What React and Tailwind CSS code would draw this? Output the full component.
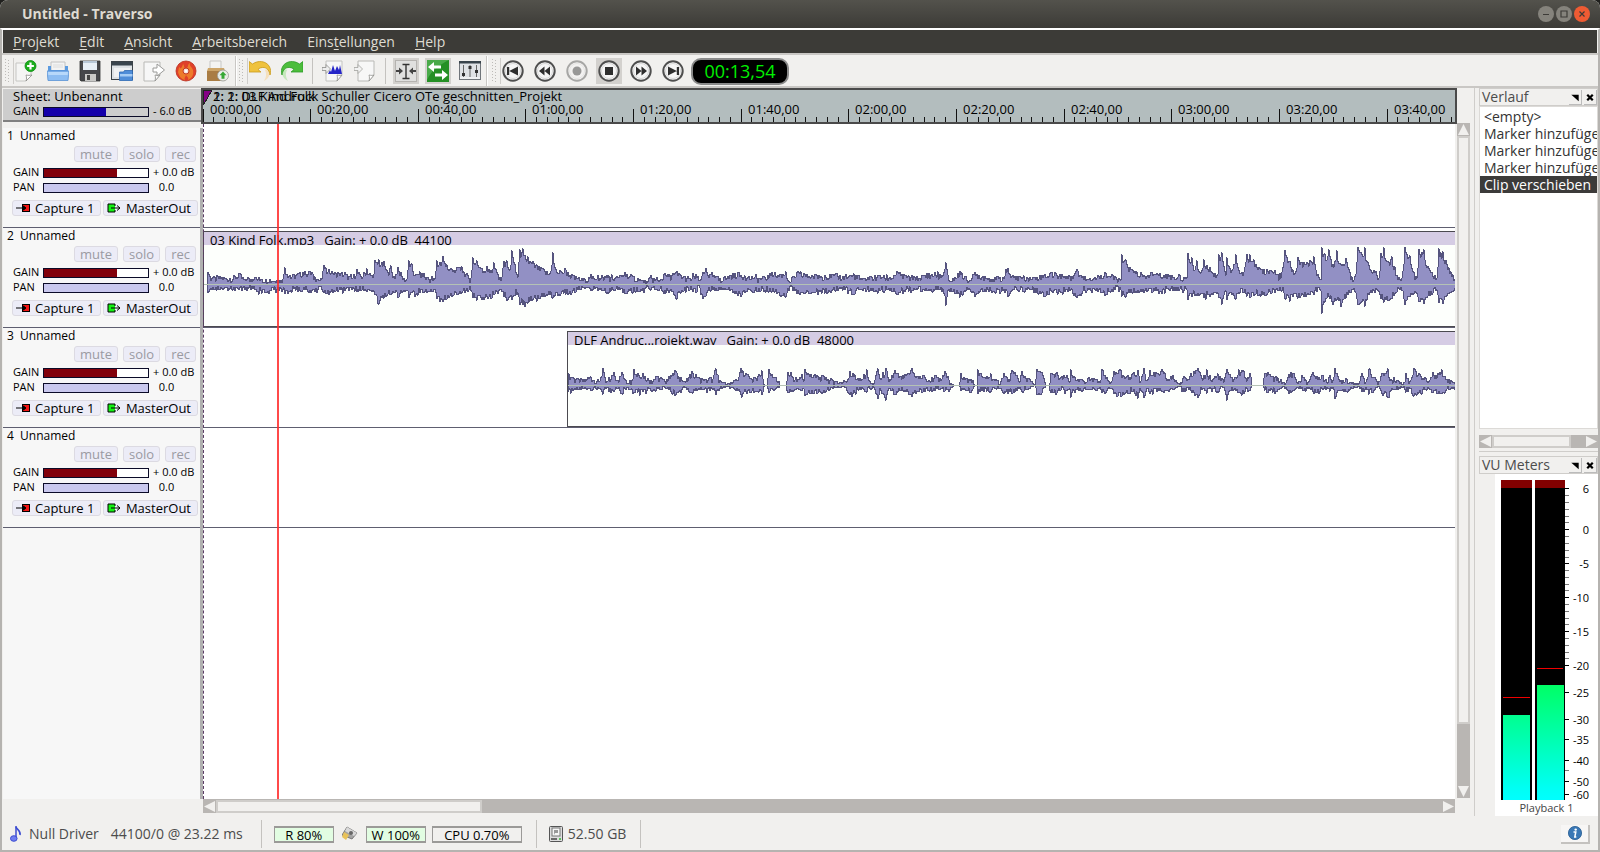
import React, { useState } from "react";

const PX_PER_SEC = 5.382;

const tracks = [
  { id: 1, name: "Unnamed" },
  { id: 2, name: "Unnamed" },
  { id: 3, name: "Unnamed" },
  { id: 4, name: "Unnamed" },
];

// envelope points: [x, up, down]
const kindFolk = [
  [3,0,0],[4,12,8],[8,6,5],[16,8,5],[26,6,5],[35,11,5],[41,5,5],[51,7,5],[58,5,9],[66,5,6],[73,4,5],[79,5,5],[81,17,9],[86,9,7],[96,12,6],[106,13,6],[111,8,7],[118,5,5],[120,19,8],[125,15,10],[131,12,7],[141,12,6],[148,6,5],[153,15,7],[157,8,6],[163,16,7],[169,7,6],[171,24,10],[175,25,20],[180,23,14],[184,12,10],[187,19,10],[190,8,8],[194,17,13],[198,8,8],[203,5,6],[205,24,13],[208,21,8],[211,9,12],[216,13,8],[224,7,7],[231,5,5],[233,24,14],[236,22,17],[239,28,17],[243,20,15],[248,15,12],[253,17,10],[258,18,8],[264,9,7],[267,6,6],[269,27,13],[273,24,16],[278,16,15],[283,18,12],[287,14,14],[290,22,10],[294,10,9],[297,4,5],[300,23,12],[303,24,16],[306,14,12],[308,34,15],[311,20,11],[314,7,8],[316,35,20],[319,36,20],[321,29,22],[324,28,19],[329,23,15],[333,20,17],[339,16,12],[346,11,10],[349,32,14],[351,17,12],[356,14,11],[362,15,10],[368,10,9],[374,6,5],[381,5,4],[394,9,6],
  [396,6,5],[403,9,9],[411,6,6],[421,12,9],[428,9,8],[436,5,7],[444,2,2],[446,7,5],[456,4,5],[460,10,9],[468,9,7],[473,13,15],[476,10,8],[486,6,6],[492,10,8],[496,4,3],[499,12,14],[502,16,12],[506,10,6],[516,6,5],[526,9,6],[534,12,11],[541,9,8],[551,7,6],[561,7,6],[568,12,8],[576,10,11],[582,13,13],[586,2,2],[593,12,9],[601,10,9],[611,10,8],[621,9,9],[631,10,6],[641,8,5],[650,11,10],[658,5,5],[666,8,6],[676,9,6],[686,7,6],[693,13,10],[701,9,7],[711,7,5],[721,9,6],[731,12,6],[739,8,4],[742,22,21],[745,4,5],[751,7,9],[756,13,13],[761,8,6],[766,4,5],[771,12,12],[781,8,5],[791,7,8],[799,7,6],[804,16,12],[808,8,6],
  [816,8,6],[826,7,5],[841,10,12],[848,12,7],[856,10,7],[866,8,6],[873,15,13],[879,8,7],[891,7,5],[901,12,11],[911,8,5],[917,4,5],[918,30,12],[922,25,13],[926,17,8],[933,13,8],[941,8,6],[948,12,8],[956,11,7],[966,9,6],[976,9,5],[983,6,5],[984,31,15],[988,27,12],[991,14,11],[993,24,11],[997,11,9],[1000,25,13],[1006,17,12],[1011,11,8],[1014,10,8],[1015,30,13],[1018,32,20],[1022,9,6],[1023,27,15],[1028,14,10],[1032,30,15],[1035,14,8],[1040,12,8],[1043,30,12],[1046,30,13],[1050,25,11],[1056,16,10],[1063,15,10],[1071,14,8],[1077,6,6],[1080,22,8],[1081,34,14],[1086,23,17],[1091,11,9],[1094,27,14],[1100,22,12],[1106,24,10],[1110,28,10],[1113,9,7],[1117,5,6],[1118,37,29],[1121,31,18],[1125,35,12],[1129,20,20],[1133,34,15],[1137,20,22],[1142,26,14],[1146,12,8],[1150,4,4],[1153,22,14],[1154,37,20],[1161,37,22],[1165,19,10],[1171,12,8],[1175,6,7],[1177,31,14],[1180,37,18],[1184,23,16],[1188,28,14],[1193,9,8],[1198,6,6],[1200,20,14],[1201,37,20],[1206,29,12],[1210,12,10],[1213,6,9],[1215,35,17],[1220,35,19],[1224,18,12],[1228,12,10],[1233,6,5],[1235,36,18],[1239,33,19],[1242,24,12],[1247,13,8],[1251,5,4],
];

const andruck = [
  [0,12,6],[8,6,4],[16,6,3],[23,9,5],[31,4,3],[35,17,9],[38,3,3],[43,6,7],[46,13,6],[50,5,3],[54,13,8],[58,5,4],[64,5,3],[66,16,7],[70,12,7],[75,12,6],[83,5,5],[88,9,6],[93,8,4],[97,4,2],[103,10,6],[107,15,10],[113,8,7],[117,4,2],[121,8,6],[124,14,7],[130,8,4],[136,5,4],[142,8,5],[145,6,4],[148,17,9],[152,5,3],[158,1,1],[166,5,3],[170,5,5],[173,17,9],[179,11,8],[184,6,6],[191,11,7],[194,15,9],[196,1,1],[199,0,0],[201,16,7],[206,8,5],[211,4,2],[212,0,0],[218,0,0],[220,13,7],[223,13,6],[229,4,3],[234,11,5],[236,4,3],[237,16,10],[243,11,8],[249,10,8],[258,8,6],[265,5,3],[273,3,2],[278,4,2],[282,14,9],[287,11,7],[293,5,4],[299,16,7],[302,4,3],[305,1,1],[310,17,13],[313,6,5],[318,17,15],[321,4,3],[327,15,9],[333,9,5],[338,10,6],[344,17,11],[350,9,6],[355,10,7],[361,5,5],[367,10,5],[373,5,3],[377,14,6],[381,6,6],[385,1,1],[386,0,0],[391,0,0],[393,12,5],[398,7,5],[403,6,7],[407,0,0],[409,0,0],[410,16,8],[416,8,6],[423,12,6],[427,5,3],[433,4,3],
  [436,12,8],[441,6,4],[444,15,8],[449,10,5],[452,3,2],[454,14,6],[460,7,4],[465,2,1],[467,0,0],[469,16,9],[474,13,8],[478,0,0],[481,0,0],[483,12,7],[488,12,9],[493,8,5],[499,10,5],[502,3,3],[503,16,12],[508,5,4],[515,5,5],[521,8,4],[528,6,5],[532,3,2],[534,16,7],[539,8,5],[544,4,3],[546,14,8],[553,15,11],[558,8,7],[565,12,6],[570,15,13],[572,3,3],[576,17,12],[579,5,3],[582,15,8],[589,12,6],[594,16,6],[600,6,5],[605,10,4],[610,2,1],[612,1,1],[616,9,6],[623,12,5],[630,17,12],[634,7,4],[639,16,8],[643,5,3],[650,12,6],[656,3,2],[659,16,15],[662,11,5],[666,6,4],[671,16,7],[676,15,8],[679,4,3],[682,12,5],[684,0,0],[695,0,0],[697,12,5],[700,13,7],[705,9,7],[713,6,3],[718,2,2],[721,11,8],[726,12,5],[729,3,2],[735,8,5],[740,3,3],[745,13,6],[751,8,8],[755,10,4],[759,3,2],[762,10,6],[765,5,2],[767,17,13],[771,6,5],[778,7,6],[785,3,3],[791,2,1],[794,12,6],[798,3,2],[801,16,9],[807,8,4],[810,1,1],[814,12,8],[820,17,12],[823,6,5],[830,5,4],[836,3,1],[838,12,7],[842,4,3],[846,17,11],[851,12,8],[857,8,4],[860,3,2],[865,13,7],[870,12,8],[874,16,8],[879,6,4],[883,5,3],[888,4,4],
];

const noise = (n) => {
  const v = Math.sin(n * 12.9898) * 43758.5453;
  return v - Math.floor(v);
};

// roughens the interpolated level so that it reads as audio
const jitter = (level, seed) => {
  if (level < 1) return 0;
  const n = noise(seed);
  const spike = noise(seed + 0.37) > 0.88 ? 2 : 0;
  const spread = Math.min(level, 6);
  return Math.max(1, Math.round(level * 0.85 + (n - 0.6) * spread + spike));
};

const buildWave = (points, mid) => {
  const up = [];
  const down = [];
  const end = points[points.length - 1][0];
  let k = 0;
  for (let x = points[0][0]; x <= end; x++) {
    while (k < points.length - 2 && x > points[k + 1][0]) k++;
    const [x0, u0, d0] = points[k];
    const [x1, u1, d1] = points[k + 1];
    const t = (x - x0) / (x1 - x0);
    const onPoint = x === x0 || x === x1;
    const u = u0 + (u1 - u0) * t;
    const d = d0 + (d1 - d0) * t;
    up.push([x, mid - (onPoint ? Math.round(u) : jitter(u, x))]);
    down.push([x, mid + (onPoint ? Math.round(d) : jitter(d, x + 5000))]);
  }
  const line = (pts) => pts.map(([x, y]) => `L${x} ${y}`).join("");
  return `M${points[0][0]} ${mid}${line(up)}${line(down.reverse())}Z`;
};

const Waveform = ({ points, mid }) => (
  <svg className="block w-full h-[81px]" shapeRendering="crispEdges">
    <path d={buildWave(points, mid + 0.5)} fill="#9290c4" stroke="#55547e" strokeWidth="1" />
    <rect x="0" y={mid} width="100%" height="1" fill="#b4c2b4" />
  </svg>
);

const Clip = ({ name, rate, start, points, mid }) => (
  <div
    className="h-24 border-t border-l border-b border-[#4b4a50] bg-[#fdfffc]"
    style={{ marginLeft: start }}
  >
    <div className="h-[13px] overflow-hidden bg-[#d5cce4] pl-1.5 text-[13px] leading-[17px] flex gap-2.5 whitespace-pre">
      <span>{name}</span>
      <span>Gain: + 0.0 dB  {rate}</span>
    </div>
    <Waveform points={points} mid={mid} />
  </div>
);

/* ---------- toolbar icons ---------- */

const Svg = ({ children }) => (
  <svg viewBox="0 0 22 22" className="w-[22px] h-[22px]">
    {children}
  </svg>
);

const NewIcon = () => (
  <Svg>
    <path d="M1 3h15v12l-5 6H1z" fill="#f5f5f4" stroke="#c6c6c3" />
    <path d="M11 21c.8-2 .6-4 0-6 2 .6 4 .4 6 0z" fill="#fff" stroke="#8a8a88" strokeWidth=".8" />
    <circle cx="15.500" cy="6" r="5.500" fill="#1cae1c" stroke="#0b8a12" strokeWidth=".8" />
    <path d="M15.500 2.600v6.800M12.100 6h6.800" stroke="#fff" strokeWidth="2.200" />
  </Svg>
);
const OpenIcon = () => (
  <Svg>
    <path d="M4 2h14v10H4z" fill="#f3f3f3" stroke="#c2c2c2" />
    <path d="M6 5h10M6 7h10" stroke="#ddd" />
    <path d="M1 6h3v4h14V6h3v7H1z" fill="#5c9be0" />
    <path d="M0 11h22l-1 9.500H1z" fill="#8dbdf2" stroke="#5a93d4" strokeWidth=".8" />
    <path d="M1 12h20l-.3 3H1.300z" fill="#b7d8fa" />
  </Svg>
);
const SaveIcon = () => (
  <Svg>
    <path d="M1 1h20v20H2l-1-1z" fill="#45464a" stroke="#333" strokeWidth=".8" />
    <path d="M4 1h14v9H4z" fill="#e6eef6" />
    <path d="M4 1h14v2H4z" fill="#b7c7d7" />
    <path d="M6 14h11v7H6z" fill="#c9c9c7" />
    <path d="M8 15h3v5H8z" fill="#444" />
  </Svg>
);
const WindowIcon = () => (
  <Svg>
    <rect x=".5" y="1.500" width="21" height="18" fill="#dde1e4" stroke="#3b4247" />
    <path d="M1 2h20v3.500H1z" fill="#39444c" />
    <path d="M3 8h16v9H3z" fill="#f0f1f2" />
    <path d="M8.500 12h4l1-1.500h8V20.500h-13z" fill="#4f8dd8" stroke="#2e69b4" strokeWidth=".8" />
    <path d="M9 14h12.500v2.500H9z" fill="#a6ccf4" />
  </Svg>
);
const ExportIcon = () => (
  <Svg>
    <path d="M1 2h16v13l-5 6H1z" fill="#f7f7f7" stroke="#b9b9b6" />
    <path d="M12 21c.6-2 .6-4 0-6 2 .6 4 .4 5 0z" fill="#fff" stroke="#8f8f8c" strokeWidth=".8" />
    <path d="M10 8h4V4l7.500 6-7.500 6v-4h-4z" fill="#fff" stroke="#9a9a98" />
  </Svg>
);
const BurnIcon = () => (
  <Svg>
    <circle cx="11" cy="11" r="10" fill="#e0402a" stroke="#b92e1c" strokeWidth=".8" />
    <path d="M3 12c1-2 0-4 2-5 0 3 2 1 3-3 2 2 0 4 3 4s1-4 4-5c-1 3 2 4 3 7 1 5-1 8-5 10 1-3-1-3-2-5-1 3-2 3-1 5-4-1-6-4-7-8z" fill="#f08a2a" opacity=".8" />
    <circle cx="11" cy="11" r="3" fill="#f4d9d0" stroke="#c33a24" />
    <circle cx="11" cy="11" r="1.500" fill="#fff" />
  </Svg>
);
const PackIcon = () => (
  <Svg>
    <path d="M3 1h11v9H3z" fill="#f4f4f2" stroke="#c7c7c4" />
    <path d="M1 8h16l1 3H0z" fill="#cda568" />
    <path d="M0 11h18v10H0z" fill="#a97c43" />
    <circle cx="16" cy="15.500" r="5.500" fill="#e9ece7" stroke="#9a9d98" strokeWidth=".8" />
    <path d="M16 11.500l3.500 3.800h-2v3.500h-3v-3.500h-2z" fill="#36a836" />
  </Svg>
);
const UndoIcon = () => (
  <Svg>
    <path d="M15 21c6-3 6-8 6-10-1-2-4-2-5-1 2 4 1 8-1 11z" fill="#f6d9a8" opacity=".7" />
    <path d="M0 1.500L3.500 4C9 0 17 1 20 6c2 3 2 6 1 9-.5-4-2.500-7-6-7.500-2.500-.3-4.500.5-6 2L12 12H0z" fill="#efc23e" stroke="#c99b1c" strokeWidth=".8" />
  </Svg>
);
const RedoIcon = () => (
  <Svg>
    <path d="M7 21c-6-3-6-8-6-10 1-2 4-2 5-1-2 4-1 8 1 11z" fill="#b4e4a8" opacity=".7" />
    <path d="M22 1.500L18.500 4C13 0 5 1 2 6c-2 3-2 6-1 9 .5-4 2.500-7 6-7.500 2.500-.3 4.500.5 6 2L10 12h12z" fill="#4cbd3c" stroke="#2f9a28" strokeWidth=".8" />
  </Svg>
);
const ImportAudioIcon = () => (
  <Svg>
    <path d="M4 1h16v14l-5 6H4z" fill="#f7f7f7" stroke="#c4c4c1" />
    <path d="M6 14l2-4 1 2 2-7 2 6 2-5 2 4 1-5 2 9z" fill="#2525c8" />
    <path d="M15 21c.6-2 .6-4 0-6 2 .6 4 .4 5 0z" fill="#fff" stroke="#8f8f8c" strokeWidth=".8" />
    <path d="M0 7.500h4V4.500l4.500 4.500L4 13.500v-3H0z" fill="#eee" stroke="#8d8d8a" strokeWidth=".8" />
  </Svg>
);
const ImportIcon = () => (
  <Svg>
    <path d="M4 1h16v14l-5 6H4z" fill="#f7f7f7" stroke="#b9b9b6" />
    <path d="M15 21c.6-2 .6-4 0-6 2 .6 4 .4 5 0z" fill="#fff" stroke="#8f8f8c" strokeWidth=".8" />
    <path d="M0 7.500h4V4.500l4.500 4.500L4 13.500v-3H0z" fill="#f2f2f2" stroke="#a3a3a0" strokeWidth=".8" />
  </Svg>
);
const SnapIcon = () => (
  <Svg>
    <rect x=".5" y=".5" width="21" height="21" fill="#e0e0df" stroke="#b5b3b0" />
    <path d="M7.500 4.500h3l.5.500.5-.5h3M11 5v13M7.500 18.500h3l.5-.5.5.5h3" stroke="#333" fill="none" strokeWidth="1.400" />
    <path d="M1 11h4M21 11h-4" stroke="#444" strokeWidth="2" />
    <path d="M4 7.500L8 11l-4 3.500zM18 7.500L14 11l4 3.500z" fill="#444" />
  </Svg>
);
const SwapIcon = () => (
  <Svg>
    <rect width="22" height="22" fill="#259025" />
    <path d="M0 0h22C14 4 4 10 0 20z" fill="#62bd62" opacity=".6" />
    <path d="M1 7l6-5v3.500h7v3H7V12zM21 15l-6-5v3.500H8v3h7V20z" fill="#fff" />
  </Svg>
);
const MixerIcon = () => (
  <Svg>
    <rect x=".5" y="1.500" width="21" height="18" fill="#dfe2e5" stroke="#70757a" />
    <path d="M0 1h22v2.500H0z" fill="#39444c" />
    <path d="M4.500 5v12M11 5v12M17.500 5v12" stroke="#666" />
    <path d="M3 13h3v3H3zM9.500 6h3v3h-3zM16 10h3v3h-3z" fill="#333" />
    <path d="M1 18h20" stroke="#fff" />
  </Svg>
);

const Transport = ({ dim, children }) => (
  <Svg>
    <g opacity={dim ? 0.45 : 1}>
      <circle cx="11" cy="11" r="9.700" fill="#f6f6f6" stroke="#4f4f4f" strokeWidth="2" />
      <circle cx="11" cy="11" r="7.500" fill="none" stroke="#d8d8d8" />
      <g fill="#2e2e2e">{children}</g>
    </g>
  </Svg>
);

const fileActions = [
  ["New project", NewIcon],
  ["Open project", OpenIcon],
  ["Save", SaveIcon],
  ["Manage project", WindowIcon],
  ["Export", ExportIcon],
  ["Burn CD", BurnIcon],
  ["Archive", PackIcon],
];

const transport = [
  ["To start", <path d="M5 7h2.200v8H5zM16 6.500v9L7.200 11z" />],
  ["Rewind", <path d="M10.500 6.500v9L5 11zM16 6.500v9L10.500 11z" />],
  ["Record", <circle cx="11" cy="11" r="4.500" />],
  ["Stop", <path d="M7 7h8v8H7z" />],
  ["Forward", <path d="M11.500 6.500v9L17 11zM6 6.500v9l5.500-4.500z" />],
  ["To end", <path d="M14.800 7H17v8h-2.200zM6 6.500v9l8.800-4.500z" />],
];

const ToolButton = ({ label, active, children }) => (
  <button
    aria-label={label}
    className={
      "w-8 h-7 flex items-center justify-center " +
      (active ? "bg-[#d3d1ce] bg-clip-content px-[3px] py-px" : "")
    }
  >
    {children}
  </button>
);

const Handle = () => (
  <div className="flex items-center gap-[3px] pl-0.5 -mr-1">
    <svg className="w-[5px] h-6">
      {Array.from({ length: 8 }, (_, i) => (
        <g key={i} fill="#bdbbb8">
          <rect x="0" y={i * 3} width="1" height="1" />
          <rect x="3" y={i * 3 + 1} width="1" height="1" />
        </g>
      ))}
    </svg>
    <div className="w-px h-[26px] bg-[#cfcdca]" />
  </div>
);

const Separator = () => <div className="w-px h-[26px] bg-[#c4c2bf] mx-1" />;

const Toolbar = () => (
  <div className="flex items-center h-8 bg-[#f1f0ee] border-b-2 border-[#c9c7c4] px-px">
    <div className="flex items-center h-full border-r border-[#c9c7c4] pr-px">
      <Handle />
      {fileActions.map(([label, Icon]) => (
        <ToolButton key={label} label={label}>
          <Icon />
        </ToolButton>
      ))}
    </div>
    <div className="flex items-center h-full border-l border-white border-r border-r-[#c9c7c4]">
      <Handle />
      <ToolButton label="Undo"><UndoIcon /></ToolButton>
      <ToolButton label="Redo"><RedoIcon /></ToolButton>
      <Separator />
      <ToolButton label="Import audio"><ImportAudioIcon /></ToolButton>
      <ToolButton label="Insert silence"><ImportIcon /></ToolButton>
      <Separator />
      <ToolButton label="Snap" active><SnapIcon /></ToolButton>
      <ToolButton label="Scroll" active><SwapIcon /></ToolButton>
      <ToolButton label="Effects"><MixerIcon /></ToolButton>
    </div>
    <div className="flex items-center h-full border-l border-white pl-0.5">
      <Handle />
      {transport.map(([label, shape]) => (
        <ToolButton key={label} label={label} active={label === "Stop"}>
          <Transport dim={label === "Record"}>{shape}</Transport>
        </ToolButton>
      ))}
    </div>
    <output className="ml-0.5 w-[98px] h-[27px] rounded-[10px] border-2 border-[#8a8a8a] bg-black text-[#00f000] text-lg leading-[23px] text-center">
      00:13,54
    </output>
  </div>
);

/* ---------- track panel ---------- */

const Slider = ({ id, label, value, text, fill, rest }) => (
  <div className="flex items-center h-[15px] pl-2.5 text-[11px]">
    <label htmlFor={id} className="w-[30px]">{label}</label>
    <input
      id={id}
      type="range"
      defaultValue={value}
      className="appearance-none w-[106px] h-2.5 border border-[#0b0b28] [&::-webkit-slider-thumb]:appearance-none [&::-webkit-slider-thumb]:w-0"
      style={{ background: `linear-gradient(to right, ${fill} ${value}%, ${rest} ${value}%)` }}
    />
    <output htmlFor={id} className="flex-1 text-left pl-1 whitespace-pre">{text}</output>
  </div>
);

const MiniButton = ({ children }) => (
  <button className="h-4 px-[5px] rounded-[3px] border border-[#dcdae2] bg-[#ececf7] text-[13px] leading-[13px] text-[#9a9aa2]">
    {children}
  </button>
);

const PortButton = ({ color, out, children }) => (
  <button className="h-4 flex items-center gap-[5px] pl-[3px] pr-1.5 rounded-[3px] border border-[#dcdae2] bg-[#ececf7] text-[13px] leading-[14px]">
    <svg viewBox="0 0 14 12" className="w-3.5 h-3">
      {out ? (
        <>
          <path d="M8 4V2H1v8h7V8" fill={color} stroke="#000" />
          <path d="M4 6h9M10 3.500L13 6l-3 2.500" fill="none" stroke="#000" />
        </>
      ) : (
        <>
          <rect x="6.500" y="2.500" width="7" height="7" fill={color} stroke="#000" />
          <path d="M0 6h9M7.500 4L10 6 7.500 8z" fill="#000" stroke="#000" />
        </>
      )}
    </svg>
    {children}
  </button>
);

const TrackHeader = ({ track }) => (
  <section className="h-[100px] border-b border-[#5e5e70] flex flex-col">
    <h2 className="h-[18px] pl-1 text-xs leading-4 whitespace-pre">{track.id}  {track.name}</h2>
    <div className="flex justify-end gap-[5px] pr-1">
      <MiniButton>mute</MiniButton>
      <MiniButton>solo</MiniButton>
      <MiniButton>rec</MiniButton>
    </div>
    <div className="mt-[3px]">
      <Slider id={`gain-${track.id}`} label="GAIN" value={70} text="+ 0.0 dB" fill="#82000b" rest="#fff" />
      <Slider id={`pan-${track.id}`} label="PAN" value={0} text="  0.0" fill="#c9c8ee" rest="#c9c8ee" />
    </div>
    <div className="mt-[5px] pl-[9px] pr-0.5 flex justify-between">
      <PortButton color="#f01414">Capture 1</PortButton>
      <PortButton color="#14f014" out>MasterOut</PortButton>
    </div>
  </section>
);

/* ---------- timeline ---------- */

const two = (n) => String(n).padStart(2, "0");

const Ruler = () => {
  const ticks = Array.from({ length: 140 }, (_, i) => i * 2);
  const labels = ticks.filter((s) => s % 20 === 0);
  return (
    <div className="relative h-9 overflow-hidden border-2 border-[#4a4a4a] bg-[#b3bdbe]">
      <svg className="block w-full h-8" shapeRendering="crispEdges">
        <path d="M0 0h9L1 14H0z" fill="#850085" stroke="#222" />
        {ticks.map((s) => {
          const major = s % 20 === 0;
          return (
            <rect key={s} x={Math.floor(s * PX_PER_SEC)} y={major ? 19 : 27} width="1" height={major ? 13 : 5} fill="#111" />
          );
        })}
      </svg>
      {labels.map((s) => (
        <span key={s} className="absolute top-[11px] text-[13px] leading-4" style={{ left: Math.floor(s * PX_PER_SEC) + 7 }}>
          {two(Math.floor(s / 60))}:{two(s % 60)},00
        </span>
      ))}
      <span className="absolute -top-0.5 left-2.5 text-[13px] leading-4 whitespace-pre">1: 1: 03 Kind Folk</span>
      <span className="absolute -top-0.5 left-2.5 text-[13px] leading-4 whitespace-pre">
        2: 2: DLF Andruck Schuller Cicero OTe geschnitten_Projekt
      </span>
    </div>
  );
};

const Arrow = ({ d, label }) => (
  <button aria-label={label} className="w-[13px] h-[13px] shrink-0 bg-[#b9b6b3]">
    <svg viewBox="0 0 13 13" className="w-[13px] h-[13px]">
      <path d={d} fill="#f1f0ee" />
    </svg>
  </button>
);

const left = "M12 1v11L1 6.500z";
const right = "M1 1v11l11-5.500z";
const up = "M1 12h11L6.500 1z";
const down = "M1 1h11L6.500 12z";

const Lane = ({ first, children }) => (
  <div className={"border-b border-[#5e5e70] pt-[3px] " + (first ? "h-[104px]" : "h-[100px]")}>
    {children}
  </div>
);

const Timeline = () => (
  <div className="flex-1 min-w-0 flex flex-col">
    <Ruler />
    <div className="relative flex-1 mx-0.5 bg-white overflow-hidden">
      <Lane first />
      <Lane>
        <Clip name="03 Kind Folk.mp3" rate="44100" start={0} points={kindFolk} mid={39} />
      </Lane>
      <Lane>
        <Clip name="DLF Andruc...rojekt.wav" rate="48000" start={364} points={andruck} mid={40} />
      </Lane>
      <Lane />
      <div className="absolute inset-y-0 left-0 border-l border-dashed border-[#5a3c64]" />
      <div className="absolute inset-y-0 w-0.5 bg-[#ff2a2a]/85" style={{ left: Math.round(13.72 * PX_PER_SEC) }} />
    </div>
    <div className="flex h-3.5 mx-0.5 border-t border-[#b9b6b3] bg-[#b9b6b3]">
      <Arrow d={left} label="Scroll left" />
      <div className="w-[266px] border-2 border-[#cfcdca] bg-[#f1f0ee]" />
      <div className="flex-1" />
      <Arrow d={right} label="Scroll right" />
    </div>
  </div>
);

/* ---------- docks ---------- */

const DockTitle = ({ children }) => (
  <header className="flex items-center h-[18px] pl-0.5 border border-[#cfcdca] text-[#4c4c4c]">
    <h2 className="flex-1 text-sm leading-4">{children}</h2>
    <button aria-label="Float" className="w-[13px] h-[15px] mr-0.5 border-r border-b border-[#bbb]">
      <svg viewBox="0 0 13 13" className="w-3"><path d="M2.500 4h8v7z" fill="#000" /></svg>
    </button>
    <button aria-label="Close" className="w-[13px] h-[15px] border-r border-b border-[#bbb]">
      <svg viewBox="0 0 13 13" className="w-3"><path d="M3.500 4l6 6M9.500 4l-6 6" stroke="#000" strokeWidth="2.400" /></svg>
    </button>
  </header>
);

const scale = [[6,14],[0,55],[-5,89],[-10,123],[-15,157],[-20,191],[-25,218],[-30,245],[-35,265],[-40,286],[-50,307],[-60,320]];
const minor = [21,28,35,42,48,62,69,76,83,96,103,110,116,130,137,144,150,164,171,178,184,296];

const Meters = () => (
  <svg width="100" height="326" className="block" shapeRendering="crispEdges">
    <defs>
      <linearGradient id="level" x1="0" y1="211" x2="0" y2="326" gradientUnits="userSpaceOnUse">
        <stop offset="0" stopColor="#00ff66" />
        <stop offset=".9" stopColor="#00fff4" />
        <stop offset="1" stopColor="#00ffff" />
      </linearGradient>
    </defs>
    <rect x="6" y="6" width="31" height="320" />
    <rect x="40" y="6" width="30" height="320" />
    <rect x="6" y="6" width="31" height="8" fill="#820000" />
    <rect x="40" y="6" width="30" height="8" fill="#820000" />
    <rect x="8" y="241" width="27" height="85" fill="url(#level)" />
    <rect x="42" y="211" width="27" height="115" fill="url(#level)" />
    <rect x="8" y="223" width="27" height="1" fill="#f00000" />
    <rect x="42" y="194" width="26" height="1" fill="#f00000" />
    {minor.map((y) => <rect key={y} x="70" y={y} width="4" height="1" fill="#777" />)}
    {scale.map(([db, y]) => (
      <g key={db}>
        <rect x="70" y={y} width="4" height="1" />
        <text x="94" y={y + 5} textAnchor="end" fontSize="11">{db}</text>
      </g>
    ))}
  </svg>
);

const Docks = () => {
  const history = ["<empty>", "Marker hinzufügen", "Marker hinzufügen", "Marker hinzufügen", "Clip verschieben"];
  const [selected, setSelected] = useState(4);
  return (
    <aside className="w-[119px] shrink-0 flex flex-col">
      <DockTitle>Verlauf</DockTitle>
      <ul className="flex-1 min-h-0 bg-white border border-[#dcdad7] pt-px overflow-hidden text-sm leading-[17px] text-[#333]">
        {history.map((item, i) => (
          <li key={i}>
            <button
              onClick={() => setSelected(i)}
              className={
                "block w-full pl-1 text-left whitespace-nowrap " +
                (selected === i ? "bg-[#3c3b3a] text-white" : "")
              }
            >
              {item}
            </button>
          </li>
        ))}
      </ul>
      <div className="flex h-[13px] mt-1.5 bg-[#b9b6b3]">
        <Arrow d={left} label="Scroll left" />
        <div className="flex-1 border-2 border-[#cfcdca] bg-[#f1f0ee]" />
        <div className="w-3.5" />
        <Arrow d={right} label="Scroll right" />
      </div>
      <div className="mt-[3px] mb-1 h-px bg-[#cfcdca]" />
      <DockTitle>VU Meters</DockTitle>
      <div className="ml-4 bg-white flex flex-col h-[342px]">
        <Meters />
        <p className="text-center text-[11px] leading-4 text-[#444]">Playback 1</p>
      </div>
    </aside>
  );
};

/* ---------- status bar ---------- */

const Badge = ({ className, children }) => (
  <div className={"h-[17px] border-y-2 border-x border-[#9b9a98] text-[13px] leading-[14px] text-center text-black " + className}>
    {children}
  </div>
);

const StatusBar = () => (
  <footer className="flex items-center h-8 mt-0.5 text-sm text-[#4c4c4c]">
    <svg viewBox="0 0 12 16" className="w-3 h-4 ml-2">
      <path d="M6 1c1 3 5 3 4 8" fill="none" stroke="#3b4bd0" strokeWidth="1.600" />
      <path d="M6 0v12" stroke="#3b4bd0" strokeWidth="1.500" />
      <ellipse cx="3.800" cy="12.500" rx="3.300" ry="2.800" fill="#6f7df0" stroke="#3b4bd0" />
    </svg>
    <span className="ml-[7px]">Null Driver</span>
    <span className="ml-3">44100/0 @ 23.22 ms</span>
    <div className="w-px h-7 ml-[18px] bg-[#c4c2bf]" />
    <Badge className="ml-3 w-[60px] bg-[#e2fde2]">R 80%</Badge>
    <svg viewBox="0 0 16 16" className="w-4 h-4 mx-2">
      <path d="M5 1l10 6-5 6L0 9z" fill="#a3a3a3" stroke="#666" strokeWidth=".8" />
      <path d="M5 1l10 6-3 3L3 5z" fill="#d9d9d9" />
      <path d="M2 6l5 3-3 5-4-3z" fill="#e8c25a" />
      <circle cx="9" cy="7" r="2" fill="#666" />
    </svg>
    <Badge className="w-[60px] bg-[#e2fde2]">W 100%</Badge>
    <Badge className="ml-1.5 w-[90px]">CPU 0.70%</Badge>
    <div className="w-px h-7 ml-3.5 bg-[#c4c2bf]" />
    <svg viewBox="0 0 14 16" className="w-3.5 h-4 ml-3">
      <rect x=".5" y=".5" width="13" height="15" rx="1" fill="#ddd" stroke="#555" />
      <rect x="3" y="2" width="8" height="8" fill="#f7f7f7" stroke="#777" />
      <path d="M5 4h4v3H6l-1 2z" fill="#999" />
      <path d="M2 13h6" stroke="#444" strokeWidth="1.500" />
      <path d="M10 13h2" stroke="#2eb82e" strokeWidth="1.500" />
    </svg>
    <span className="ml-[5px]">52.50 GB</span>
    <div className="w-px h-7 ml-3.5 bg-[#c4c2bf]" />
    <button aria-label="Info" className="ml-auto mr-2 w-[29px] h-[19px] flex items-center justify-center border-r-2 border-b-2 border-[#c4c2bf] bg-[#f7f6f5]">
      <svg viewBox="0 0 14 14" className="w-3.5 h-3.5">
        <circle cx="7" cy="7" r="6.600" fill="#3a78b5" stroke="#245a92" strokeWidth=".8" />
        <circle cx="7.700" cy="3.600" r="1.200" fill="#fff" />
        <path d="M5.500 6h2.300l-1 5h1.500" fill="none" stroke="#fff" strokeWidth="1.500" />
      </svg>
    </button>
  </footer>
);

const menus = [
  ["", "P", "rojekt"],
  ["", "E", "dit"],
  ["", "A", "nsicht"],
  ["", "A", "rbeitsbereich"],
  ["Eins", "t", "ellungen"],
  ["", "H", "elp"],
];

const WindowButton = ({ label, close, d }) => (
  <button
    aria-label={label}
    className={"w-4 h-4 rounded-full " + (close ? "bg-[#ee5b33]" : "bg-[#85837c]")}
  >
    <svg viewBox="0 0 16 16" className="w-4 h-4">
      <path d={d} fill="none" stroke="#3c3b37" strokeWidth="1.200" />
    </svg>
  </button>
);

const App = () => {
  return (
    <div className="bg-[#20201e]">
      <div className="h-screen flex flex-col rounded-t-lg overflow-hidden bg-[#f1f0ee] font-['Open_Sans','Noto_Sans',sans-serif] text-black">
        <div className="h-7 shrink-0 flex items-center pl-[22px] pr-2.5 bg-linear-to-b from-[#53524c] to-[#3c3b37]">
          <h1 className="flex-1 text-sm font-bold text-[#dfdbd2]">Untitled - Traverso</h1>
          <div className="flex gap-0.5">
            <WindowButton label="Minimize" d="M5 8.500h6" />
            <WindowButton label="Maximize" d="M5 5h6v6H5z" />
            <WindowButton label="Close" close d="M5.500 5.500l5 5M10.500 5.500l-5 5" />
          </div>
        </div>
        <div className="flex-1 min-h-0 flex flex-col border-l-2 border-r-2 border-b-2 border-[#b5b3b0] border-t-2 border-t-white">
          <nav className="h-[23px] shrink-0 mx-px bg-[#3c3b37] flex items-center gap-5 pl-2.5 text-sm text-[#dfdbd2]">
            {menus.map(([a, key, b]) => (
              <button key={b} className="leading-[22px]">
                {a}<u className="underline-offset-2">{key}</u>{b}
              </button>
            ))}
          </nav>
          <div className="h-[3px] shrink-0 border-t-2 border-[#c9c7c4]" />
          <Toolbar />
          <main className="flex-1 min-h-0 flex pl-px">
            <div className="w-[198px] shrink-0 flex flex-col">
              <section className="h-[33px] mb-1.5 mt-px bg-[#cdcdcd] border-b-2 border-[#808080]">
                <h2 className="pl-2.5 text-[13px] leading-[15px]">Sheet: Unbenannt</h2>
                <Slider id="sheet-gain" label="GAIN" value={60} text="- 6.0 dB" fill="#1400aa" rest="#cdcdcd" />
              </section>
              <div className="flex-1 -mr-0.5 bg-[#f7f7f7] border-r-3 border-[#b0b0b0]">
                {tracks.map((track) => (
                  <TrackHeader key={track.id} track={track} />
                ))}
              </div>
              <div className="h-[17px]" />
            </div>
            <div className="flex-1 min-w-0 flex pb-[3px]">
              <Timeline />
              <div className="w-[13px] mt-[35px] mb-[15px] flex flex-col bg-[#b9b6b3]">
                <Arrow d={up} label="Scroll up" />
                <div className="flex-1 border-2 border-[#cfcdca] bg-[#f1f0ee]" />
                <div className="h-[61px]" />
                <Arrow d={down} label="Scroll down" />
              </div>
            </div>
            <div className="w-[9px] flex justify-center"><div className="w-px bg-[#cfcdca]" /></div>
            <Docks />
          </main>
          <StatusBar />
        </div>
      </div>
    </div>
  );
};

export default App;
